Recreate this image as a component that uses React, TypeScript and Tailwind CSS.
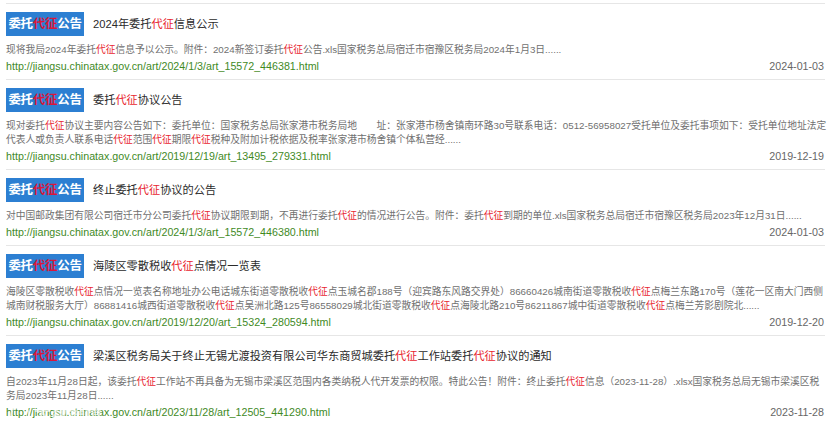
import React from "react";

type Item = {
  title: string;
  lines: string[];
  url: string;
  date: string;
};

const items: Item[] = [
  {
    title: "2024年委托代征信息公示",
    lines: [
      "现将我局2024年委托代征信息予以公示。附件：2024新签订委托代征公告.xls国家税务总局宿迁市宿豫区税务局2024年1月3日......",
    ],
    url: "http://jiangsu.chinatax.gov.cn/art/2024/1/3/art_15572_446381.html",
    date: "2024-01-03",
  },
  {
    title: "委托代征协议公告",
    lines: [
      "现对委托代征协议主要内容公告如下：委托单位：国家税务总局张家港市税务局地　　址：张家港市杨舍镇南环路30号联系电话：0512-56958027受托单位及委托事项如下：受托单位地址法定",
      "代表人或负责人联系电话代征范围代征期限代征税种及附加计税依据及税率张家港市杨舍镇个体私营经......",
    ],
    url: "http://jiangsu.chinatax.gov.cn/art/2019/12/19/art_13495_279331.html",
    date: "2019-12-19",
  },
  {
    title: "终止委托代征协议的公告",
    lines: [
      "对中国邮政集团有限公司宿迁市分公司委托代征协议期限到期，不再进行委托代征的情况进行公告。附件：委托代征到期的单位.xls国家税务总局宿迁市宿豫区税务局2023年12月31日......",
    ],
    url: "http://jiangsu.chinatax.gov.cn/art/2024/1/3/art_15572_446380.html",
    date: "2024-01-03",
  },
  {
    title: "海陵区零散税收代征点情况一览表",
    lines: [
      "海陵区零散税收代征点情况一览表名称地址办公电话城东街道零散税收代征点玉城名郡188号（迎宾路东风路交界处）86660426城南街道零散税收代征点梅兰东路170号（莲花一区南大门西侧",
      "城南财税服务大厅）86881416城西街道零散税收代征点吴洲北路125号86558029城北街道零散税收代征点海陵北路210号86211867城中街道零散税收代征点梅兰芳影剧院北......",
    ],
    url: "http://jiangsu.chinatax.gov.cn/art/2019/12/20/art_15324_280594.html",
    date: "2019-12-20",
  },
  {
    title: "梁溪区税务局关于终止无锡尤渡投资有限公司华东商贸城委托代征工作站委托代征协议的通知",
    lines: [
      "自2023年11月28日起，该委托代征工作站不再具备为无锡市梁溪区范围内各类纳税人代开发票的权限。特此公告！附件：终止委托代征信息（2023-11-28）.xlsx国家税务总局无锡市梁溪区税",
      "务局2023年11月28日......",
    ],
    url: "http://jiangsu.chinatax.gov.cn/art/2023/11/28/art_12505_441290.html",
    date: "2023-11-28",
  },
];

// split text so every 代征 is shown in red
function Highlight({ text }: { text: string }) {
  const parts = text.split("代征");
  return (
    <>
      {parts.map((p, i) => (
        <React.Fragment key={i}>
          {p}
          {i < parts.length - 1 && <span className="text-[#e8262f]">代征</span>}
        </React.Fragment>
      ))}
    </>
  );
}

function Badge() {
  return (
    <div className="flex h-6 w-[78px] shrink-0 items-center justify-center bg-[#2c7fd2] text-[12.5px] font-bold tracking-[-0.3px] text-white">
      委托<span className="text-[#d8173a]">代征</span>公告
    </div>
  );
}

export default function App() {
  return (
    <div
      className="relative h-[431px] w-[831px] overflow-hidden bg-white px-[6px] pt-[3px]"
      style={{ fontFamily: '"Liberation Sans", "Noto Sans CJK SC", sans-serif' }}
    >
      {items.map((item, idx) => (
        <div
          key={idx}
          className="border-t border-[#e6e6e6] pb-[6px] pt-2 last:border-b"
        >
          {/* Title row */}
          <div className="flex h-6 items-center">
            <Badge />
            <span className="ml-[9px] whitespace-nowrap text-[11.2px] text-[#2b2b2b]">
              <Highlight text={item.title} />
            </span>
          </div>

          {/* Summary */}
          <div className="mt-[7px] text-[9.75px] leading-[14px] text-[#707070]">
            {item.lines.map((l, i) => (
              <div key={i} className="whitespace-nowrap">
                <Highlight text={l} />
              </div>
            ))}
          </div>

          {/* Link + date */}
          <div className="mt-[2px] flex items-center justify-between text-[10.7px] leading-[14px]">
            <span className="text-[#3f8a1f]">{item.url}</span>
            <span className="pr-px text-[#666666]">{item.date}</span>
          </div>
        </div>
      ))}

      {/* watermark of the screenshot source */}
      <div className="pointer-events-none absolute left-[10px] top-[402px] flex items-center gap-1 opacity-70">
        <div className="h-[20px] w-[20px] rounded-full border-2 border-white/90" />
        <span className="text-[17px] font-bold text-white/90">大数跨境</span>
      </div>
    </div>
  );
}
